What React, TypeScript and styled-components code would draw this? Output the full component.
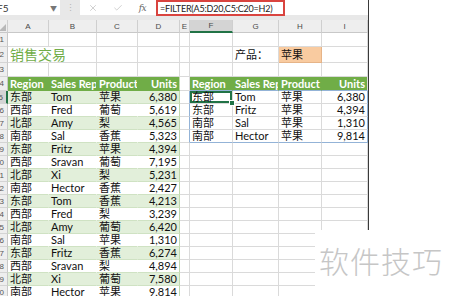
import React from 'react';
import styled, { createGlobalStyle } from 'styled-components';
import { X, Check } from 'lucide-react';

const Global = createGlobalStyle`
  html, body { margin: 0; padding: 0; background: #fff; overflow: hidden; }
  body { width: 450px; height: 296px; font-family: Lato, "Noto Sans CJK SC", sans-serif; }
`;

const COLS = '20px 41px 48px 41px 42px 10px 43px 46px 43px 46px';
const GRID = '#dadada';
const BAND = '#e2efda';
const BAND_LINE = '#cfe2c3';
const TABLE_EDGE = '#bfd8ad';
const HEAD_GREEN = '#70ad47';
const SPILL = '#93b3d7';
const SEL = '#217346';

const Page = styled.div`
  position: relative;
  display: flex;
  width: 450px;
  height: 296px;
  overflow: hidden;
  background: #fff;
`;

const Window = styled.div`
  width: 368px;
  flex: none;
  display: flex;
  flex-direction: column;
  border-right: 1px solid #3a3a3a;
  overflow: hidden;
  background: #fff;
`;

const FormulaBar = styled.div`
  display: flex;
  align-items: flex-start;
  height: 16px;
  flex: none;
  background: #e8e8e8;
`;

const NameBox = styled.div`
  width: 60px;
  height: 15px;
  box-sizing: border-box;
  background: #fff;
  display: flex;
  align-items: center;
  justify-content: space-between;
  padding-right: 3px;
  font-size: 10px;
  color: #333;
`;

const NameText = styled.span`
  margin-left: -3px;
`;

const Caret = styled.span`
  font-size: 7px;
  color: #777;
`;

const Dots = styled.div`
  width: 20px;
  height: 15px;
  display: flex;
  align-items: center;
  justify-content: center;
  color: #b5b5b5;
  font-size: 9px;
`;

const ButtonStrip = styled.div`
  width: 75px;
  height: 15px;
  background: #fff;
  display: grid;
  grid-template-columns: 25px 25px 25px;
  align-items: center;
  justify-items: center;
  color: #a8a8a8;
`;

const Fx = styled.span`
  font-family: "DejaVu Serif", serif;
  font-style: italic;
  font-size: 9px;
  color: #666;
  letter-spacing: -0.5px;
`;

const FormulaInput = styled.div`
  flex: 1;
  height: 15px;
  background: #fff;
  display: flex;
  align-items: flex-start;
  padding-left: 1px;
`;

const Highlight = styled.span`
  position: relative;
  z-index: 2;
  height: 16px;
  width: 129px;
  box-sizing: border-box;
  border: 2px solid #d9443f;
  display: flex;
  align-items: center;
  padding-left: 2px;
  font-size: 9px;
  letter-spacing: -0.2px;
  color: #222;
  white-space: nowrap;
  background: #fff;
`;

const Gap = styled.div`
  height: 4px;
  flex: none;
  background: #e8e8e8;
`;

const Sheet = styled.div`
  margin-left: -12px;
  width: 380px;
  display: flex;
  flex-direction: column;
  background: #fff;
`;

const Row = styled.div<{ $h: number }>`
  display: grid;
  grid-template-columns: ${COLS};
  height: ${p => p.$h}px;
  flex: none;
`;

const ColHead = styled.div<{ $sel?: boolean }>`
  box-sizing: border-box;
  background: ${p => (p.$sel ? '#d4d4d4' : '#eeeeee')};
  border-right: 1px solid #cfcfcf;
  border-bottom: ${p => (p.$sel ? `2px solid ${SEL}` : '1px solid #c8c8c8')};
  display: flex;
  align-items: center;
  justify-content: center;
  font-family: "Liberation Sans", sans-serif;
  font-size: 8px;
  color: #4a4a4a;
`;

const Corner = styled.div`
  position: relative;
  box-sizing: border-box;
  background: #eeeeee;
  border-right: 1px solid #cfcfcf;
  border-bottom: 1px solid #c8c8c8;
  &::after {
    content: '';
    position: absolute;
    right: 1px;
    bottom: 1px;
    border-left: 7px solid transparent;
    border-bottom: 7px solid #b8b8b8;
  }
`;

const RowHead = styled.div<{ $sel?: boolean }>`
  box-sizing: border-box;
  background: ${p => (p.$sel ? '#d4d4d4' : '#eeeeee')};
  border-right: ${p => (p.$sel ? `2px solid ${SEL}` : '1px solid #c8c8c8')};
  border-bottom: 1px solid #d4d4d4;
  display: flex;
  align-items: center;
  justify-content: flex-end;
  padding-right: 3px;
  font-family: "Liberation Sans", sans-serif;
  font-size: 8px;
  color: #555;
`;

type CellProps = {
  $bg?: string;
  $align?: 'left' | 'right' | 'center';
  $bold?: boolean;
  $color?: string;
  $br?: string;
  $bb?: string;
  $size?: number;
  $visible?: boolean;
};

const Cell = styled.div<CellProps>`
  box-sizing: border-box;
  position: relative;
  min-width: 0;
  background: ${p => p.$bg ?? 'transparent'};
  border-right: 1px solid ${p => p.$br ?? GRID};
  border-bottom: 1px solid ${p => p.$bb ?? GRID};
  color: ${p => p.$color ?? '#111'};
  font-weight: ${p => (p.$bold ? 700 : 400)};
  font-size: ${p => p.$size ?? 11}px;
  line-height: 12px;
  display: flex;
  align-items: center;
  justify-content: ${p => (p.$align === 'right' ? 'flex-end' : p.$align === 'center' ? 'center' : 'flex-start')};
  padding: 0 2px;
  white-space: nowrap;
  overflow: ${p => (p.$visible ? 'visible' : 'hidden')};
  z-index: ${p => (p.$visible ? 1 : 0)};
`;

const Selected = styled(Cell)`
  overflow: visible;
  z-index: 3;
  box-shadow: inset 0 0 0 2px ${SEL};
  &::after {
    content: '';
    position: absolute;
    right: -3px;
    bottom: -3px;
    width: 4px;
    height: 4px;
    background: ${SEL};
    border: 1px solid #fff;
  }
`;

const Watermark = styled.div`
  position: absolute;
  left: 315px;
  top: 230px;
  right: 0;
  bottom: 0;
  background: #fff;
  padding: 15px 0 0 4px;
  font-family: "Noto Sans CJK SC", sans-serif;
  font-size: 30px;
  line-height: 30px;
  font-weight: 300;
  color: #c6c6c6;
  letter-spacing: 1px;
  white-space: nowrap;
  z-index: 5;
`;

const LETTERS = ['A', 'B', 'C', 'D', 'E', 'F', 'G', 'H', 'I'];

const DATA: [string, string, string, string][] = [
  ['东部', 'Tom', '苹果', '6,380'],
  ['西部', 'Fred', '葡萄', '5,619'],
  ['北部', 'Amy', '梨', '4,565'],
  ['南部', 'Sal', '香蕉', '5,323'],
  ['东部', 'Fritz', '苹果', '4,394'],
  ['西部', 'Sravan', '葡萄', '7,195'],
  ['北部', 'Xi', '梨', '5,231'],
  ['南部', 'Hector', '香蕉', '2,427'],
  ['东部', 'Tom', '香蕉', '4,213'],
  ['西部', 'Fred', '梨', '3,239'],
  ['北部', 'Amy', '葡萄', '6,420'],
  ['南部', 'Sal', '苹果', '1,310'],
  ['东部', 'Fritz', '香蕉', '6,274'],
  ['西部', 'Sravan', '梨', '4,894'],
  ['北部', 'Xi', '葡萄', '7,580'],
  ['南部', 'Hector', '苹果', '9,814'],
];

const RESULT: [string, string, string, string][] = [
  ['东部', 'Tom', '苹果', '6,380'],
  ['东部', 'Fritz', '苹果', '4,394'],
  ['南部', 'Sal', '苹果', '1,310'],
  ['南部', 'Hector', '苹果', '9,814'],
];

const HEADERS = ['Region', 'Sales Rep', 'Product', 'Units'];

function EmptyCells({ n }: { n: number }) {
  return (
    <>
      {Array.from({ length: n }).map((_, i) => (
        <Cell key={i} />
      ))}
    </>
  );
}

export default function App() {
  return (
    <Page>
      <Global />
      <Window>
        <FormulaBar>
          <NameBox>
            <NameText>F5</NameText>
            <Caret>▼</Caret>
          </NameBox>
          <Dots>⋮</Dots>
          <ButtonStrip>
            <X size={10} strokeWidth={1.3} />
            <Check size={10} strokeWidth={1.3} />
            <Fx>fx</Fx>
          </ButtonStrip>
          <FormulaInput>
            <Highlight>=FILTER(A5:D20,C5:C20=H2)</Highlight>
          </FormulaInput>
        </FormulaBar>
        <Gap />
        <Sheet>
          <Row $h={13}>
            <Corner />
            {LETTERS.map(l => (
              <ColHead key={l} $sel={l === 'F'}>
                {l}
              </ColHead>
            ))}
          </Row>
          <Row $h={14}>
            <RowHead>1</RowHead>
            <EmptyCells n={9} />
          </Row>
          <Row $h={16}>
            <RowHead>2</RowHead>
            <Cell $visible $br="transparent" $color={HEAD_GREEN} $size={14}>
              销售交易
            </Cell>
            <EmptyCells n={5} />
            <Cell>产品：</Cell>
            <Cell $bg="#f9cba0" $br="#e6b488" $bb="#e6b488">
              苹果
            </Cell>
            <Cell />
          </Row>
          <Row $h={14}>
            <RowHead>3</RowHead>
            <EmptyCells n={9} />
          </Row>
          <Row $h={14}>
            <RowHead>4</RowHead>
            {HEADERS.map((h, i) => (
              <Cell
                key={'l' + h}
                $bg={HEAD_GREEN}
                $color="#fff"
                $bold
                $align={i === 3 ? 'right' : 'left'}
                $br={i === 3 ? TABLE_EDGE : 'transparent'}
                $bb={HEAD_GREEN}
              >
                {h}
              </Cell>
            ))}
            <Cell />
            {HEADERS.map((h, i) => (
              <Cell
                key={'r' + h}
                $bg={HEAD_GREEN}
                $color="#fff"
                $bold
                $align={i === 3 ? 'right' : 'left'}
                $br={i === 3 ? GRID : 'transparent'}
                $bb={SPILL}
              >
                {h}
              </Cell>
            ))}
          </Row>
          {DATA.map((d, r) => {
            const rowNum = r + 5;
            const band = r % 2 === 0 ? BAND : '#fff';
            const res = RESULT[r];
            const inSpill = r < RESULT.length;
            return (
              <Row $h={13} key={rowNum}>
                <RowHead $sel={rowNum === 5}>{rowNum}</RowHead>
                {d.map((v, i) => (
                  <Cell
                    key={i}
                    $bg={band}
                    $align={i === 3 ? 'right' : 'left'}
                    $br={i === 3 ? TABLE_EDGE : 'transparent'}
                    $bb={BAND_LINE}
                  >
                    {v}
                  </Cell>
                ))}
                <Cell $br={inSpill ? SPILL : GRID} />
                {inSpill ? (
                  res.map((v, i) => {
                    const props: CellProps = {
                      $align: i === 3 ? 'right' : 'left',
                      $br: i === 3 ? SPILL : GRID,
                      $bb: r === RESULT.length - 1 ? SPILL : GRID,
                    };
                    return r === 0 && i === 0 ? (
                      <Selected key={i} {...props}>
                        {v}
                      </Selected>
                    ) : (
                      <Cell key={i} {...props}>
                        {v}
                      </Cell>
                    );
                  })
                ) : (
                  <EmptyCells n={4} />
                )}
              </Row>
            );
          })}
        </Sheet>
      </Window>
      <Watermark>软件技巧</Watermark>
    </Page>
  );
}
